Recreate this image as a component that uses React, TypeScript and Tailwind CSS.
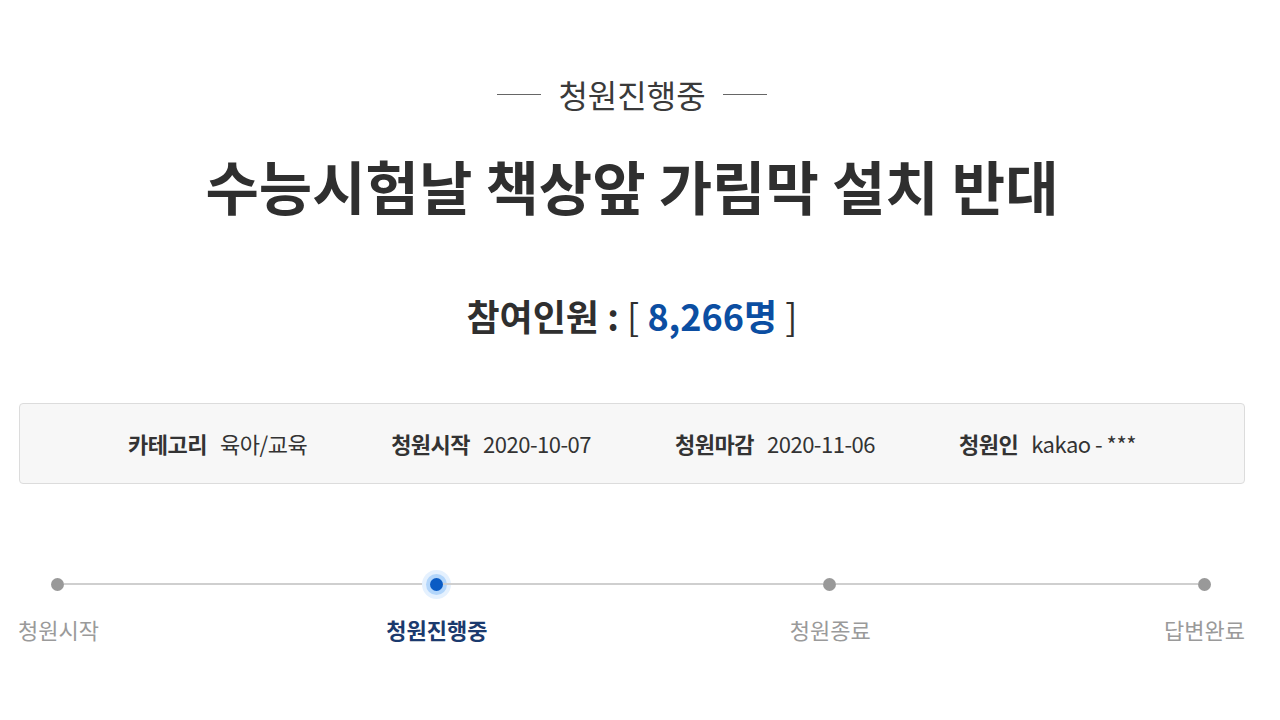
export default function App() {
  const steps = ["청원시작", "청원진행중", "청원종료", "답변완료"];
  const segment = ["", "flex-[379]", "flex-[394]", "flex-[375]"];
  const active = 1;
  return (
    <div
      className="min-h-[720px] w-full bg-white pl-[19px] pr-[35px] text-[#333]"
      style={{ fontFamily: '"Noto Sans CJK KR", "Noto Sans", sans-serif' }}
    >
      {/* status */}
      <div className="flex items-center justify-center gap-[17px] pt-[74px]">
        <span className="h-px w-[44px] bg-[#666]" />
        <span className="text-[32px] leading-[40px] text-[#3a3a3a]">청원진행중</span>
        <span className="h-px w-[44px] bg-[#666]" />
      </div>

      <h1 className="mt-[36px] text-center text-[58px] font-bold leading-[70px] text-[#2f2f2f]">
        수능시험날 책상앞 가림막 설치 반대
      </h1>

      <div className="mt-[71px] text-center text-[36px] font-bold leading-[48px] text-[#2f2f2f]">
        참여인원 : <span className="font-normal">[</span>{" "}
        <span className="text-[#0b4ea2]">8,266명</span>{" "}
        <span className="font-normal">]</span>
      </div>

      {/* info box */}
      <div className="mt-[64px] flex h-[81px] items-center justify-center gap-[84px] rounded-[4px] border border-[#dcdcdc] bg-[#f7f7f7] text-[22px] tracking-[-0.5px] text-[#333]">
        <div className="flex items-center gap-[13px]">
          <span className="font-bold">카테고리</span>
          <span>육아/교육</span>
        </div>
        <div className="flex items-center gap-[13px]">
          <span className="font-bold">청원시작</span>
          <span>2020-10-07</span>
        </div>
        <div className="flex items-center gap-[13px]">
          <span className="font-bold">청원마감</span>
          <span>2020-11-06</span>
        </div>
        <div className="flex items-center gap-[13px]">
          <span className="font-bold">청원인</span>
          <span>kakao - ***</span>
        </div>
      </div>

      {/* progress */}
      <div className="mt-[88px]">
        <div className="flex h-[24px] items-center pl-[32px] pr-[34px]">
          {steps.map((s, i) => (
            <div
              key={s}
              className={i === 0 ? "flex items-center" : `flex items-center ${segment[i]}`}
            >
              {i > 0 && <span className="h-[2px] flex-1 bg-[#cfcfcf]" />}
              {i === active ? (
                <span className="h-[13px] w-[13px] rounded-full bg-[#0a5bc4] shadow-[0_0_0_4px_#b3d6fb,0_0_0_8px_#e5f1fe]" />
              ) : (
                <span className="h-[13px] w-[13px] rounded-full bg-[#999]" />
              )}
            </div>
          ))}
        </div>
        <div className="mt-[19px] flex pl-[33px] pr-[34px] text-[22px] leading-[28px]">
          {steps.map((s, i) => (
            <div
              key={s}
              className={i === 0 ? "flex" : `flex justify-end ${segment[i]}`}
            >
              <span className="flex w-[13px] justify-center">
                <span
                  className={
                    i === active
                      ? "whitespace-nowrap font-bold text-[#1b3a6e]"
                      : "whitespace-nowrap text-[#9a9a9a]"
                  }
                >
                  {s}
                </span>
              </span>
            </div>
          ))}
        </div>
      </div>
    </div>
  );
}
